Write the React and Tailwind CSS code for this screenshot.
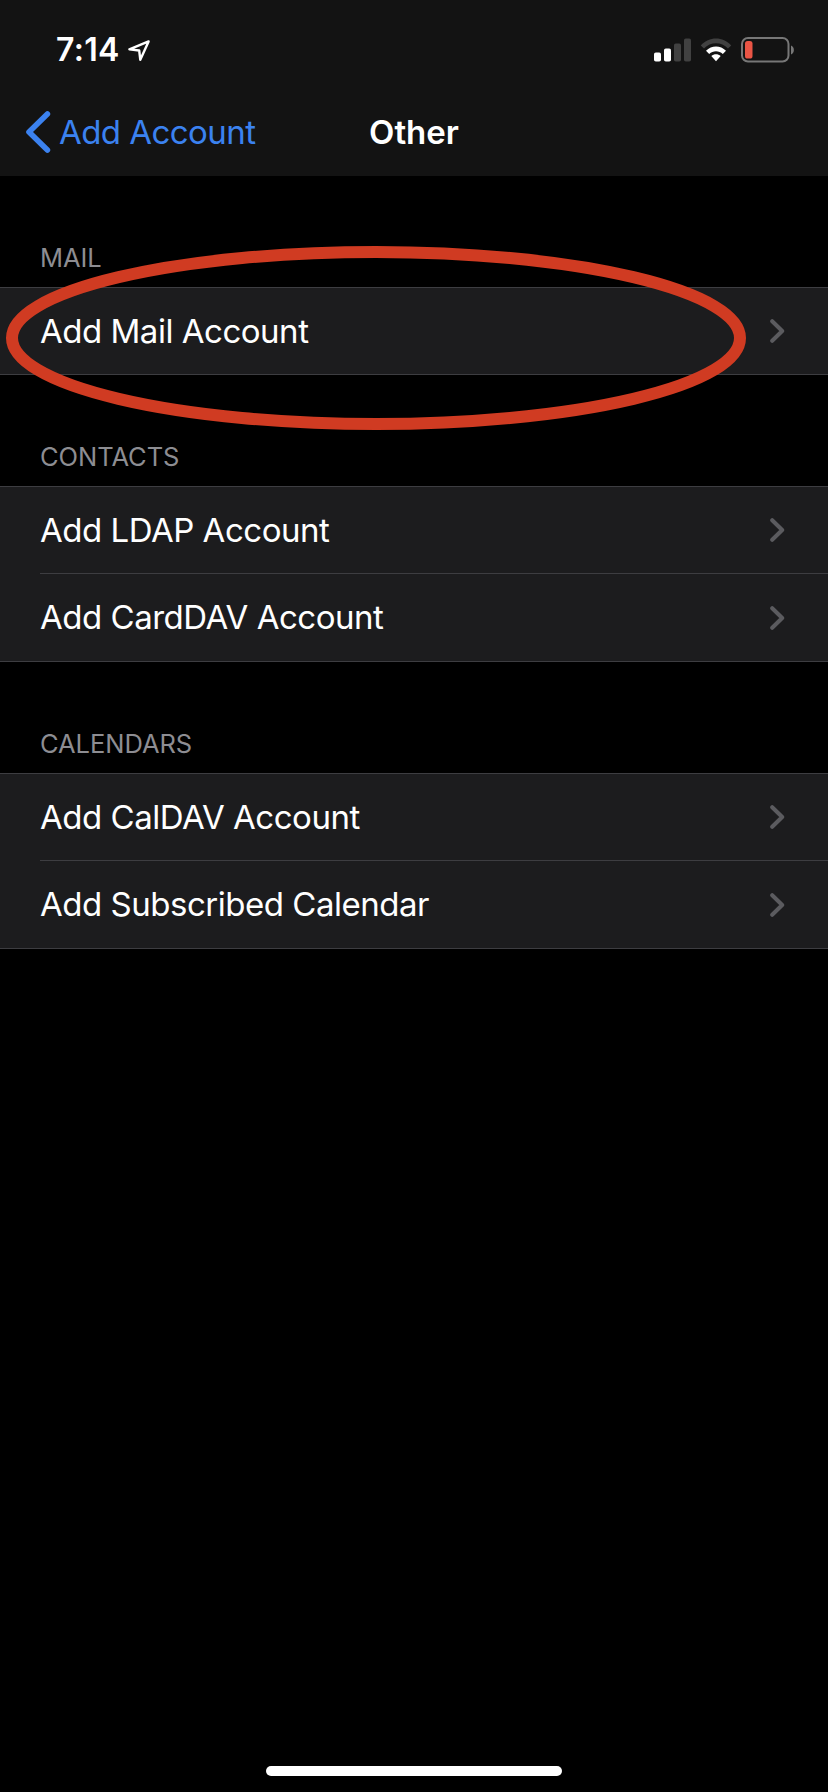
import React from 'react';

const sections = [
    { title: 'MAIL', rows: ['Add Mail Account'] },
    { title: 'CONTACTS', rows: ['Add LDAP Account', 'Add CardDAV Account'] },
    { title: 'CALENDARS', rows: ['Add CalDAV Account', 'Add Subscribed Calendar'] },
];

function LocationArrow() {
    return (
        <svg className="w-6 h-6 ml-[7px]" viewBox="0 0 24 24" fill="none" stroke="white" strokeWidth="2.4" strokeLinejoin="round">
            <path d="M21.6 3.4 L2.4 11.4 L12.2 12.5 L13.3 21.8 Z" />
        </svg>
    );
}

function Signal() {
    return (
        <svg className="w-[37px] h-6" viewBox="0 0 37 24">
            <rect x="0" y="14.5" width="7" height="9" rx="1.8" fill="#fff" />
            <rect x="10" y="10.5" width="7" height="13" rx="1.8" fill="#fff" />
            <rect x="20" y="5.5" width="7" height="18" rx="1.8" fill="#414141" />
            <rect x="30" y="0.5" width="7" height="23" rx="1.8" fill="#414141" />
        </svg>
    );
}

function Wifi() {
    return (
        <svg className="w-8 h-6 ml-[9.5px]" viewBox="0 0 32 24">
            <path d="M0.8 7.4 C9 -1.9 23 -1.9 31.2 7.4 L28 10.6 C21.5 3.4 10.5 3.4 4 10.6 Z" fill="#414141" />
            <path d="M6 12.8 C11.5 7.1 20.5 7.1 26 12.8 L22.8 16 C19 12.3 13 12.3 9.2 16 Z" fill="#fff" />
            <path d="M11.3 18 C14 15.8 18 15.8 20.7 18 L16 23.2 Z" fill="#fff" />
        </svg>
    );
}

function Battery() {
    return (
        <svg className="w-[54px] h-[26px] ml-[9px]" viewBox="0 0 54 26">
            <rect x="1" y="1" width="46.5" height="23.5" rx="6" fill="none" stroke="#777" strokeWidth="2" />
            <rect x="4" y="4" width="7.5" height="17.5" rx="2.6" fill="#ea5545" />
            <path d="M50 8.5 C53.8 10 53.8 16 50 17.5 Z" fill="#777" />
        </svg>
    );
}

function Chevron() {
    return (
        <svg className="w-[15px] h-6" viewBox="0 0 15 24" fill="none" stroke="#5b5b5f" strokeWidth="4" strokeLinecap="round" strokeLinejoin="round">
            <path d="M2.2 2.2 L12.2 12 L2.2 21.8" />
        </svg>
    );
}

function Section({ title, rows }) {
    return (
        <section>
            <h2 className="h-[111px] pt-[57px] pl-10 text-[25.5px] leading-[50px] tracking-[-0.05px] text-[#8d8d92]">{title}</h2>
            <div className="border-y border-[#3d3d41] bg-[#1c1c1e]">
                {rows.map((row, i) => (
                    <div key={row} className="pl-10">
                        <div className={`flex items-center justify-between pr-[43px] ${i === 0 ? 'h-[86px]' : 'h-[88px] border-t border-[#3d3d41]'}`}>
                            <span className="text-[33px] leading-none tracking-[-0.48px]">{row}</span>
                            <Chevron />
                        </div>
                    </div>
                ))}
            </div>
        </section>
    );
}

export default function App() {
    return (
        <div className="relative w-[828px] h-[1792px] bg-black text-white font-[Inter,sans-serif] overflow-hidden flex flex-col">
            <header className="h-44 bg-[#131313] shrink-0">
                <div className="h-[88px] pt-[12px] pl-14 pr-[33px] flex justify-between">
                    <div className="flex items-center h-[76px]">
                        <span className="text-[32px] font-semibold leading-none tracking-[0.3px]">7:14</span>
                        <LocationArrow />
                    </div>
                    <div className="flex items-center h-[76px]">
                        <Signal />
                        <Wifi />
                        <Battery />
                    </div>
                </div>
                <div className="h-[88px] grid grid-cols-3 items-center pl-6">
                    <div className="flex items-center text-[#3b82f0]">
                        <svg className="w-7 h-11 mr-[7px]" viewBox="0 0 28 44" fill="none" stroke="currentColor" strokeWidth="5.6" strokeLinecap="round" strokeLinejoin="round">
                            <path d="M23.4 4 L5 22 L23.4 40" />
                        </svg>
                        <span className="text-[33px] leading-none tracking-[-0.55px] whitespace-nowrap">Add Account</span>
                    </div>
                    <h1 className="text-[33px] font-semibold leading-none text-center -ml-6">Other</h1>
                </div>
            </header>

            <main className="flex-1">
                {sections.map((s) => (
                    <Section key={s.title} title={s.title} rows={s.rows} />
                ))}
            </main>

            <div className="w-[296px] h-[10px] mb-4 rounded-full bg-white self-center shrink-0" />

            {/* hand-drawn highlight around the mail row */}
            <svg className="absolute left-0 top-[240px] w-[760px] h-[200px] pointer-events-none" viewBox="0 0 760 200">
                <ellipse cx="376" cy="98" rx="364" ry="86" fill="none" stroke="#d03b22" strokeWidth="12" />
            </svg>
        </div>
    );
}
